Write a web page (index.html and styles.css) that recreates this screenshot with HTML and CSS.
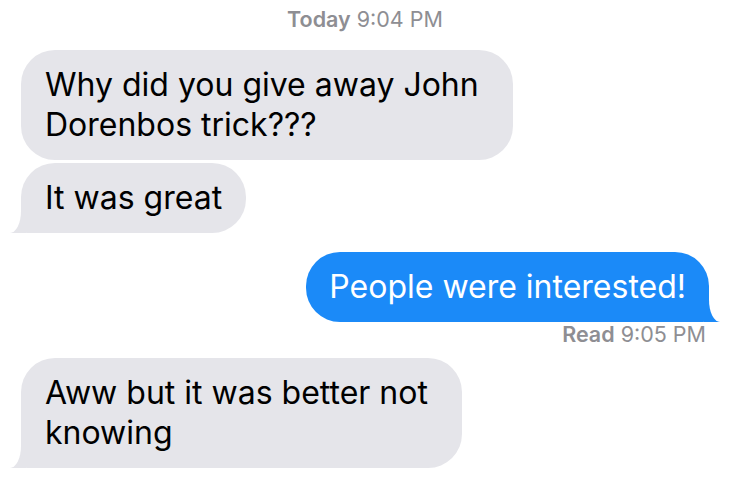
FILE: index.html
```html
<!DOCTYPE html>
<html lang="en">
<head>
    <meta charset="UTF-8">
    <meta name="viewport" content="width=device-width, initial-scale=1.0">
    <title>Messages</title>
    <link rel="stylesheet" href="styles.css">
</head>
<body>
    <div class="thread">
        <div class="stamp"><b>Today</b> 9:04 PM</div>

        <div class="row in first">
            <div class="bubble multi">Why did you give away John<br>Dorenbos trick???</div>
        </div>
        <div class="row in grouped">
            <div class="bubble tail">It was great</div>
        </div>

        <div class="row out">
            <div class="bubble tail">People were interested!</div>
        </div>
        <div class="status"><b>Read</b> 9:05 PM</div>

        <div class="row in after-status">
            <div class="bubble multi tail">Aww but it was better not<br>knowing</div>
        </div>
    </div>
</body>
</html>
```

FILE: styles.css
```css
body {
    margin: 0;
    background-color: #fff;
    font-family: "Inter", "Roboto", sans-serif;
}
.thread {
    display: flex;
    flex-direction: column;
    padding: 7px 23px 0 21px;
}
.stamp, .status {
    font-size: 21.5px;
    line-height: 24px;
    color: #8e8e93;
}
.stamp b, .status b {
    font-weight: 600;
}
.stamp {
    text-align: center;
    margin-bottom: 19px;
}
.status {
    text-align: right;
    padding-right: 3px;
}
.row {
    display: flex;
    margin-top: 19px;
}
.row.first {
    margin-top: 0;
}
.row.grouped {
    margin-top: 3px;
}
.row.after-status {
    margin-top: 12px;
}
.row.out {
    justify-content: flex-end;
}
.bubble {
    position: relative;
    padding: 15px 24px;
    font-size: 32px;
    line-height: 40px;
    border-radius: 34px;
    background-color: #e5e5ea;
    color: #000;
}
.bubble.multi {
    padding-right: 34px;
}
.out .bubble {
    background-color: #1b8af8;
    color: #fff;
    padding: 15px 23px;
}

/* tails */
.bubble.tail::before,
.bubble.tail::after {
    content: "";
    position: absolute;
    bottom: 0;
    height: 26px;
}
.in .bubble.tail {
    border-bottom-left-radius: 6px;
}
.in .bubble.tail::before {
    left: -11px;
    width: 16px;
    background-color: #e5e5ea;
}
.in .bubble.tail::after {
    left: -30px;
    width: 30px;
    background-color: #fff;
    border-bottom-right-radius: 11px 22px;
}
.out .bubble.tail {
    border-bottom-right-radius: 6px;
}
.out .bubble.tail::before {
    right: -11px;
    width: 16px;
    background-color: #1b8af8;
}
.out .bubble.tail::after {
    right: -30px;
    width: 30px;
    background-color: #fff;
    border-bottom-left-radius: 11px 22px;
}
```
